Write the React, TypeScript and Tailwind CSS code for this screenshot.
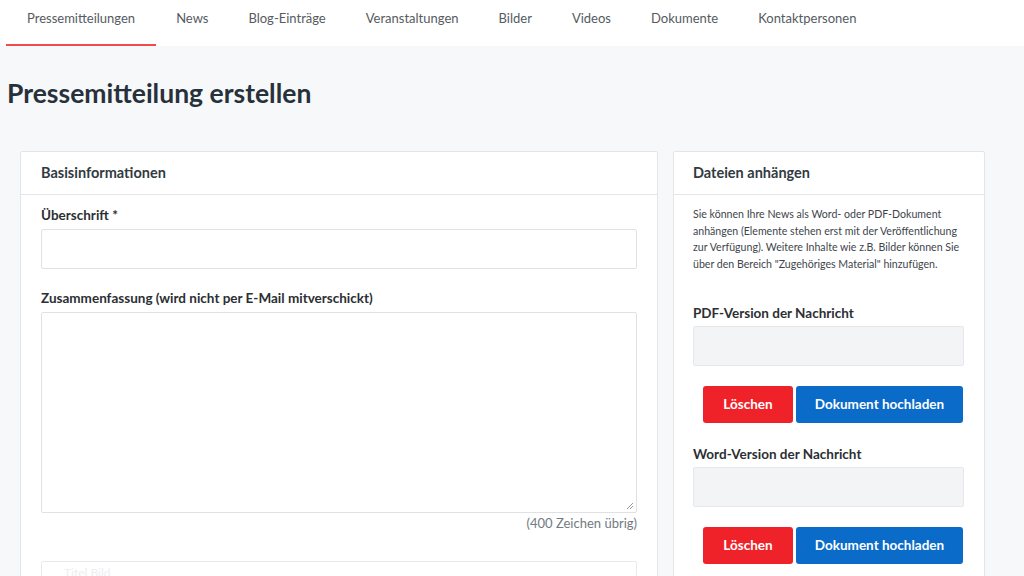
import React from "react";

const tabs = ["Pressemitteilungen", "News", "Blog-Einträge", "Veranstaltungen", "Bilder", "Videos", "Dokumente", "Kontaktpersonen"];

function FileBlock({ label }: { label: string }) {
  return (
    <div className="flex flex-col">
      <div className="text-[13.5px] font-bold text-[#2b2f33] leading-[18px]">{label}</div>
      <div className="mt-[4px] h-[40px] w-[271px] bg-[#f3f4f6] border border-[#e6e8eb] rounded-[2px]" />
      <div className="mt-[20px] flex gap-[3px] pl-[10px]">
        <button className="h-[37px] w-[90px] rounded-[3px] bg-[#f02229] text-white text-[13.5px] font-bold">Löschen</button>
        <button className="h-[37px] w-[167px] rounded-[3px] bg-[#0a6bc8] text-white text-[13.5px] font-bold">Dokument hochladen</button>
      </div>
    </div>
  );
}

export default function App() {
  return (
    <div className="w-[1024px] h-[576px] overflow-hidden bg-[#f7f8fa] text-[#2b2f33]" style={{ fontFamily: "Lato, 'Noto Sans', sans-serif" }}>
      <div className="h-[46px] bg-white flex px-[6px]">
        {tabs.map((t, i) => (
          <div
            key={t}
            className={
              "h-full flex items-start pt-[9px] text-[13px] text-[#555b61] " +
              (i === 0 ? "border-b-2 border-[#f04a4a] px-[21px]" : "px-[20px]")
            }
          >
            {t}
          </div>
        ))}
      </div>
      <h1 className="mt-[31px] ml-[7px] text-[26.5px] font-bold text-[#27313b] leading-[32px]">Pressemitteilung erstellen</h1>
      <div className="mt-[42px] ml-[20px] flex gap-[15px] items-start">
        <div className="w-[638px] h-[500px] bg-white border border-[#e3e5e8] rounded-[2px]">
          <div className="h-[43px] border-b border-[#e3e5e8] px-[20px] flex items-center text-[14.5px] font-bold text-[#323a42]">Basisinformationen</div>
          <div className="px-[20px] pt-[11px]">
            <div className="text-[13.5px] font-bold leading-[18px]">Überschrift *</div>
            <div className="mt-[5px] h-[40px] border border-[#dfe2e5] rounded-[2px]" />
            <div className="mt-[20px] text-[13.5px] font-bold leading-[18px]">Zusammenfassung (wird nicht per E-Mail mitverschickt)</div>
            <div className="mt-[5px] h-[201px] border border-[#dfe2e5] rounded-[2px] relative">
              <svg className="absolute right-[2px] bottom-[2px]" width="8" height="8" viewBox="0 0 8 8">
                <path d="M7 1L1 7M7 4L4 7" stroke="#999" strokeWidth="1" />
              </svg>
            </div>
            <div className="mt-[1px] text-right text-[13px] text-[#737a81] leading-[18px]">(400 Zeichen übrig)</div>
            <div className="mt-[29px] h-[40px] border border-[#e8eaec] rounded-[2px] px-[22px] pt-[2px] text-[12px] text-[#eceef0]">Titel Bild</div>
          </div>
        </div>
        <div className="w-[312px] h-[500px] bg-white border border-[#e3e5e8] rounded-[2px]">
          <div className="h-[43px] border-b border-[#e3e5e8] px-[19px] flex items-center text-[14.5px] font-bold text-[#323a42]">Dateien anhängen</div>
          <div className="px-[19px] pt-[11px]">
            <p className="text-[10.6px] leading-[16.5px] text-[#3e454c] whitespace-nowrap">
              Sie können Ihre News als Word- oder PDF-Dokument<br />
              anhängen (Elemente stehen erst mit der Veröffentlichung<br />
              zur Verfügung). Weitere Inhalte wie z.B. Bilder können Sie<br />
              über den Bereich "Zugehöriges Material" hinzufügen.
            </p>
            <div className="mt-[32px]">
              <FileBlock label="PDF-Version der Nachricht" />
            </div>
            <div className="mt-[22px]">
              <FileBlock label="Word-Version der Nachricht" />
            </div>
          </div>
        </div>
      </div>
    </div>
  );
}
